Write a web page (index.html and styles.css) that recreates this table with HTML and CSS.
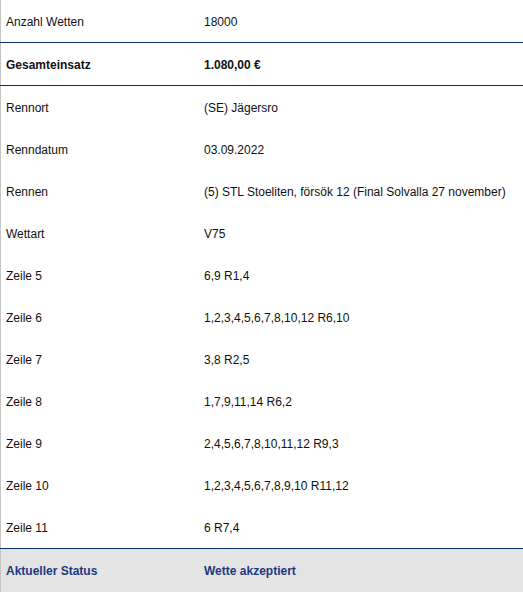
FILE: index.html
```html
<!DOCTYPE html>
<html lang="de">
<head>
<meta charset="utf-8">
<link rel="stylesheet" href="styles.css">
</head>
<body>
<table class="bet">
  <tr><td class="label">Anzahl Wetten</td><td>18000</td></tr>
  <tr class="total"><td class="label">Gesamteinsatz</td><td>1.080,00 €</td></tr>
  <tr><td class="label">Rennort</td><td>(SE) Jägersro</td></tr>
  <tr><td class="label">Renndatum</td><td>03.09.2022</td></tr>
  <tr><td class="label">Rennen</td><td>(5) STL Stoeliten, försök 12 (Final Solvalla 27 november)</td></tr>
  <tr><td class="label">Wettart</td><td>V75</td></tr>
  <tr><td class="label">Zeile 5</td><td>6,9 R1,4</td></tr>
  <tr><td class="label">Zeile 6</td><td>1,2,3,4,5,6,7,8,10,12 R6,10</td></tr>
  <tr><td class="label">Zeile 7</td><td>3,8 R2,5</td></tr>
  <tr><td class="label">Zeile 8</td><td>1,7,9,11,14 R6,2</td></tr>
  <tr><td class="label">Zeile 9</td><td>2,4,5,6,7,8,10,11,12 R9,3</td></tr>
  <tr><td class="label">Zeile 10</td><td>1,2,3,4,5,6,7,8,9,10 R11,12</td></tr>
  <tr class="last"><td class="label">Zeile 11</td><td>6 R7,4</td></tr>
  <tr class="status"><td class="label">Aktueller Status</td><td>Wette akzeptiert</td></tr>
</table>
</body>
</html>
```
FILE: styles.css
```css
html, body {
  margin: 0;
  padding: 0;
  background: #ffffff;
}
body {
  font-family: "Liberation Sans", Arial, sans-serif;
  font-size: 12px;
  color: #111111;
  overflow: hidden;
}
.bet {
  width: 523px;
  border-collapse: collapse;
  border-left: 1px solid #c4c4c4;
}
.bet td {
  height: 40px;
  padding: 2px 5px 0 5px;
  vertical-align: middle;
  white-space: nowrap;
}
.bet td.label {
  width: 188px;
}
.bet tr:first-child td {
  border-bottom: 1px solid #0d2f6e;
}
.total td {
  font-weight: bold;
  border-bottom: 1px solid #0d2f6e;
}
.last td {
  border-bottom: 1px solid #0d2f6e;
}
.status td {
  background: #e4e4e4;
  color: #1a3a7e;
  font-weight: bold;
  height: 43px;
  padding-top: 0;
}
```
